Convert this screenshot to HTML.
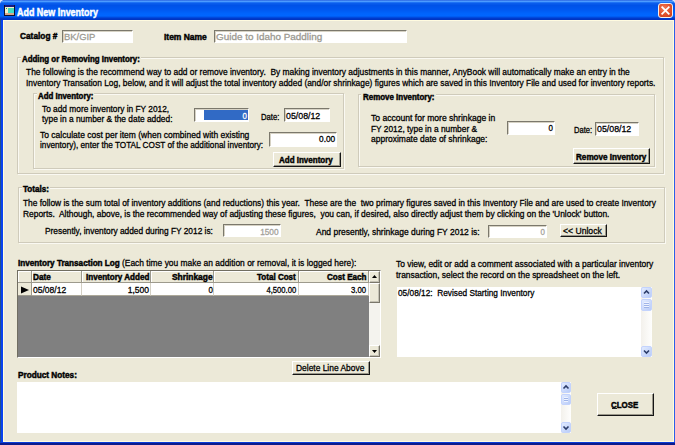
<!DOCTYPE html>
<html><head><meta charset="utf-8">
<style>
html,body{margin:0;padding:0;width:675px;height:445px;overflow:hidden;background:#d8e4f8}
*{box-sizing:border-box}
.a{position:absolute}
.t{position:absolute;white-space:pre;font-family:"Liberation Sans",sans-serif}
#win{position:absolute;left:0;top:0;width:675px;height:445px;background:#0842f0;border-radius:5px 5px 0 0;overflow:hidden}
#title{position:absolute;left:0;top:0;width:675px;height:20px;background:linear-gradient(to bottom,#2b64e0 0px,#4c9bff 1.5px,#1e72f4 2.5px,#0a5cec 3.5px,#0052e8 5.5px,#0058f0 9.5px,#0064fc 13.5px,#0066ff 16px,#0052e6 17px,#0040d4 18px,#0034c2 19px,#0034c2 20px)}
#client{position:absolute;left:3px;top:20px;width:671px;height:422px;background:#ece9d8;border-top:1px solid #fffbe0;border-left:1px solid #fffedc;border-bottom:1px solid #fffbe0;border-right:1px solid #fffedc}
.tb{position:absolute;background:#fff;border-top:1px solid #7b786c;border-left:1px solid #7b786c;border-bottom:1px solid #fff;border-right:1px solid #fff;box-shadow:inset 1px 1px 0 #d6d2c4}
.btn{position:absolute;background:#ece9d8;border-top:1px solid #fff;border-left:1px solid #fff;border-bottom:1px solid #151515;border-right:1px solid #151515;box-shadow:inset -1px -1px 0 #9a978a}
.grp{position:absolute;border:1px solid #cfcbbb;box-shadow:inset 1px 1px 0 #faf9f2,1px 1px 0 #faf9f2}
.gt{position:absolute;background:#ece9d8;height:9px}
.hc{position:absolute;background:#ece9d8;border-right:1px solid #9d9a8d;border-bottom:1px solid #9d9a8d;box-shadow:inset 1px 1px 0 #fff}
.dc{position:absolute;background:#fff;border-right:1px solid #d4d0c4;border-bottom:1px solid #aca899}
.sbb{position:absolute;background:#ece9d8;border-top:1px solid #fff;border-left:1px solid #fff;border-bottom:1px solid #7a776b;border-right:1px solid #7a776b;box-shadow:inset -1px -1px 0 #c4c1b4}
.xsb{position:absolute;background:linear-gradient(to right,#f3f1ec,#fefefd)}
.xbtn{position:absolute;background:linear-gradient(135deg,#e2ebff,#b9ccf8);border:1px solid #c3d3fd;border-radius:2px}
</style></head><body>
<div id="win">
 <div id="title"></div>
 <!-- icon -->
 <div class="a" style="left:4px;top:5px;width:11px;height:11px;background:#101030"></div>
 <div class="a" style="left:5px;top:5px;width:9px;height:2px;background:#1a1a80"></div>
 <div class="a" style="left:5px;top:7px;width:9px;height:8px;background:#f4f0c8"></div>
 <div class="a" style="left:8px;top:8px;width:6px;height:5px;background:linear-gradient(to bottom,#4ad8b0,#38e0d0)"></div>
 <div class="a" style="left:5px;top:13px;width:9px;height:2px;background:#d8a888"></div>
 <div class="a" style="left:6px;top:8px;width:1px;height:1px;background:#30a040"></div>
 <!-- close button -->
 <div class="a" style="left:658px;top:3px;width:15px;height:15px;border-radius:3px;background:radial-gradient(circle at 40% 35%,#f07a58,#e0502a 55%,#c43c18);border:1px solid #f4f0f0"></div>
 <svg class="a" style="left:658px;top:3px" width="15" height="15" viewBox="0 0 15 15"><path d="M4.2 4.2 L10.8 10.8 M10.8 4.2 L4.2 10.8" stroke="#fff" stroke-width="1.7" stroke-linecap="square"/></svg>
 <div class="a" style="left:0;top:20px;width:1px;height:425px;background:#1f4f90"></div>
 <div class="a" style="left:0;top:442px;width:675px;height:1px;background:#0a3cd8"></div>
 <div class="a" style="left:0;top:443px;width:675px;height:2px;background:#0c1c8c"></div>
 <div class="a" style="left:674px;top:20px;width:1px;height:422px;background:#2c5ee8"></div>
 <div id="client"></div>
 <!-- top textboxes -->
 <div class="tb" style="left:62px;top:30px;width:71px;height:13px"></div>
 <div class="tb" style="left:214px;top:30px;width:193px;height:13px"></div>
 <!-- group 1 -->
 <div class="grp" style="left:17px;top:57px;width:647px;height:117px"></div>
 <div class="gt" style="left:21px;top:54px;width:120px"></div>
 <!-- group add -->
 <div class="grp" style="left:33px;top:93px;width:311px;height:76px"></div>
 <div class="gt" style="left:37px;top:89px;width:57px"></div>
 <!-- group remove -->
 <div class="grp" style="left:358px;top:94px;width:297px;height:73px"></div>
 <div class="gt" style="left:361px;top:90px;width:75px"></div>
 <!-- totals -->
 <div class="grp" style="left:18px;top:187px;width:647px;height:56px"></div>
 <div class="gt" style="left:22px;top:183px;width:28px"></div>
 <!-- add inv textboxes -->
 <div class="tb" style="left:194px;top:108px;width:55px;height:14px"></div>
 <div class="a" style="left:204px;top:110px;width:44px;height:10px;background:#316ac5"></div>
 <div class="tb" style="left:284px;top:108px;width:46px;height:14px"></div>
 <div class="tb" style="left:269px;top:132px;width:68px;height:15px"></div>
 <div class="btn" style="left:273px;top:152px;width:68px;height:15px"></div>
 <!-- remove inv -->
 <div class="tb" style="left:507px;top:121px;width:48px;height:14px"></div>
 <div class="tb" style="left:595px;top:122px;width:44px;height:14px"></div>
 <div class="btn" style="left:573px;top:148px;width:77px;height:16px"></div>
 <!-- totals boxes -->
 <div class="tb" style="left:223px;top:224px;width:58px;height:13px"></div>
 <div class="tb" style="left:488px;top:225px;width:59px;height:13px"></div>
 <div class="btn" style="left:560px;top:224px;width:47px;height:13px"></div>
 <!-- grid -->
 <div class="a" style="left:17px;top:270px;width:364px;height:88px;border-top:1px solid #716e62;border-left:1px solid #716e62;border-bottom:1px solid #fff;border-right:1px solid #fff;background:#808080"></div>
 <div class="hc" style="left:18px;top:271px;width:14px;height:12px"></div>
 <div class="hc" style="left:32px;top:271px;width:50px;height:12px"></div>
 <div class="hc" style="left:82px;top:271px;width:69px;height:12px"></div>
 <div class="hc" style="left:151px;top:271px;width:63px;height:12px"></div>
 <div class="hc" style="left:214px;top:271px;width:85px;height:12px"></div>
 <div class="hc" style="left:299px;top:271px;width:70px;height:12px"></div>
 <div class="a" style="left:18px;top:283px;width:14px;height:13px;background:#ece9d8;border-right:1px solid #9d9a8d;border-bottom:1px solid #9d9a8d"></div>
 <svg class="a" style="left:20px;top:286px" width="10" height="8" viewBox="0 0 10 8"><path d="M1 0.5 L9 4 L1 7.5 Z" fill="#000"/></svg>
 <div class="dc" style="left:32px;top:283px;width:50px;height:13px"></div>
 <div class="dc" style="left:82px;top:283px;width:69px;height:13px"></div>
 <div class="dc" style="left:151px;top:283px;width:63px;height:13px"></div>
 <div class="dc" style="left:214px;top:283px;width:85px;height:13px"></div>
 <div class="dc" style="left:299px;top:283px;width:70px;height:13px"></div>
 <!-- grid scrollbar -->
 <div class="a" style="left:369px;top:271px;width:11px;height:86px;background:#f4f3ee"></div>
 <div class="sbb" style="left:369px;top:271px;width:11px;height:12px"></div>
 <svg class="a" style="left:369px;top:271px" width="11" height="12" viewBox="0 0 11 12"><path d="M3 7 L8 7 L5.5 4 Z" fill="#000"/></svg>
 <div class="sbb" style="left:369px;top:283px;width:11px;height:20px"></div>
 <div class="sbb" style="left:369px;top:345px;width:11px;height:12px"></div>
 <svg class="a" style="left:369px;top:345px" width="11" height="12" viewBox="0 0 11 12"><path d="M3 5 L8 5 L5.5 8 Z" fill="#000"/></svg>
 <div class="btn" style="left:292px;top:361px;width:78px;height:14px"></div>
 <!-- comment box -->
 <div class="a" style="left:397px;top:287px;width:255px;height:70px;background:#fff"></div>
 <div class="xsb" style="left:641px;top:287px;width:11px;height:69px"></div>
 <div class="xbtn" style="left:641px;top:287px;width:11px;height:11px"></div>
 <svg class="a" style="left:641px;top:287px" width="11" height="11" viewBox="0 0 11 11"><path d="M3 6.5 L5.5 4 L8 6.5" stroke="#2c3d6a" stroke-width="1.6" fill="none"/></svg>
 <div class="xbtn" style="left:641px;top:299px;width:11px;height:12px"></div>
 <div class="a" style="left:644px;top:302px;width:5px;height:6px;background:repeating-linear-gradient(to bottom,#eef3ff 0,#eef3ff 1px,#9fb4e8 1px,#9fb4e8 2px)"></div>
 <div class="xbtn" style="left:641px;top:346px;width:11px;height:11px"></div>
 <svg class="a" style="left:641px;top:346px" width="11" height="11" viewBox="0 0 11 11"><path d="M3 4.5 L5.5 7 L8 4.5" stroke="#2c3d6a" stroke-width="1.6" fill="none"/></svg>
 <!-- notes box -->
 <div class="a" style="left:17px;top:382px;width:554px;height:51px;background:#fff"></div>
 <div class="xsb" style="left:561px;top:382px;width:10px;height:51px"></div>
 <div class="xbtn" style="left:561px;top:382px;width:10px;height:11px"></div>
 <svg class="a" style="left:561px;top:382px" width="10" height="11" viewBox="0 0 10 11"><path d="M2.5 6.5 L5 4 L7.5 6.5" stroke="#2c3d6a" stroke-width="1.6" fill="none"/></svg>
 <div class="xbtn" style="left:561px;top:394px;width:10px;height:11px"></div>
 <div class="a" style="left:564px;top:397px;width:4px;height:5px;background:repeating-linear-gradient(to bottom,#eef3ff 0,#eef3ff 1px,#9fb4e8 1px,#9fb4e8 2px)"></div>
 <div class="xbtn" style="left:561px;top:422px;width:10px;height:11px"></div>
 <svg class="a" style="left:561px;top:422px" width="10" height="11" viewBox="0 0 10 11"><path d="M2.5 4.5 L5 7 L7.5 4.5" stroke="#2c3d6a" stroke-width="1.6" fill="none"/></svg>
 <!-- close -->
 <div class="btn" style="left:597px;top:393px;width:57px;height:23px"></div>
 <div class="a" style="left:612px;top:408px;width:5px;height:1px;background:#222"></div>
<div class="t" style="left:17.40px;top:7.00px;font-size:10.5px;line-height:10.5px;font-weight:700;color:#fff;-webkit-text-stroke:0.45px #fff;transform:scaleX(0.8510);transform-origin:0 0">Add New Inventory</div>
<div class="t" style="left:20.20px;top:32.00px;font-size:8.6px;line-height:8.6px;font-weight:700;color:#000;-webkit-text-stroke:0.45px #000;transform:scaleX(0.9664);transform-origin:0 0">Catalog #</div>
<div class="t" style="left:64.00px;top:32.00px;font-size:9.6px;line-height:9.6px;font-weight:400;color:#9c9a92;-webkit-text-stroke:0.3px #9c9a92;transform:scaleX(0.9810);transform-origin:0 0">BK/GIP</div>
<div class="t" style="left:164.20px;top:33.00px;font-size:8.6px;line-height:8.6px;font-weight:700;color:#000;-webkit-text-stroke:0.45px #000;transform:scaleX(0.9845);transform-origin:0 0">Item Name</div>
<div class="t" style="left:216.30px;top:32.00px;font-size:9.6px;line-height:9.6px;font-weight:400;color:#9c9a92;-webkit-text-stroke:0.3px #9c9a92;transform:scaleX(1.0317);transform-origin:0 0">Guide to Idaho Paddling</div>
<div class="t" style="left:22.20px;top:55.00px;font-size:8.6px;line-height:8.6px;font-weight:700;color:#000;-webkit-text-stroke:0.45px #000;transform:scaleX(0.9177);transform-origin:0 0">Adding or Removing Inventory:</div>
<div class="t" style="left:26.40px;top:67.00px;font-size:9.6px;line-height:9.6px;font-weight:400;color:#000;-webkit-text-stroke:0.3px #000;transform:scaleX(0.8752);transform-origin:0 0">The following is the recommend way to add or remove inventory.  By making inventory adjustments in this manner, AnyBook will automatically make an entry in the</div>
<div class="t" style="left:26.40px;top:78.00px;font-size:9.6px;line-height:9.6px;font-weight:400;color:#000;-webkit-text-stroke:0.3px #000;transform:scaleX(0.8730);transform-origin:0 0">Inventory Transation Log, below, and it will adjust the total inventory added (and/or shrinkage) figures which are saved in this Inventory File and used for inventory reports.</div>
<div class="t" style="left:37.70px;top:92.00px;font-size:8.6px;line-height:8.6px;font-weight:700;color:#000;-webkit-text-stroke:0.45px #000;transform:scaleX(0.9147);transform-origin:0 0">Add Inventory:</div>
<div class="t" style="left:41.60px;top:104.00px;font-size:9.6px;line-height:9.6px;font-weight:400;color:#000;-webkit-text-stroke:0.3px #000;transform:scaleX(0.8680);transform-origin:0 0">To add more inventory in FY 2012,</div>
<div class="t" style="left:41.60px;top:114.00px;font-size:9.6px;line-height:9.6px;font-weight:400;color:#000;-webkit-text-stroke:0.3px #000;transform:scaleX(0.8704);transform-origin:0 0">type in a number &amp; the date added:</div>
<div class="t" style="right:427.80px;top:112.00px;font-size:8.8px;line-height:8.8px;font-weight:400;color:#fff;-webkit-text-stroke:0.3px #fff;transform:scaleX(0.9000);transform-origin:100% 0">0</div>
<div class="t" style="left:261.10px;top:112.00px;font-size:9.6px;line-height:9.6px;font-weight:400;color:#000;-webkit-text-stroke:0.3px #000;transform:scaleX(0.7987);transform-origin:0 0">Date:</div>
<div class="t" style="left:285.50px;top:111.00px;font-size:9.6px;line-height:9.6px;font-weight:400;color:#000;-webkit-text-stroke:0.3px #000;transform:scaleX(0.9172);transform-origin:0 0">05/08/12</div>
<div class="t" style="left:40.30px;top:130.00px;font-size:9.6px;line-height:9.6px;font-weight:400;color:#000;-webkit-text-stroke:0.3px #000;transform:scaleX(0.8862);transform-origin:0 0">To calculate cost per item (when combined with existing</div>
<div class="t" style="left:40.30px;top:140.00px;font-size:9.6px;line-height:9.6px;font-weight:400;color:#000;-webkit-text-stroke:0.3px #000;transform:scaleX(0.8539);transform-origin:0 0">inventory), enter the TOTAL COST of the additional inventory:</div>
<div class="t" style="right:339.40px;top:135.00px;font-size:8.8px;line-height:8.8px;font-weight:400;color:#000;-webkit-text-stroke:0.3px #000;transform:scaleX(0.9400);transform-origin:100% 0">0.00</div>
<div class="t" style="left:279.40px;top:156.00px;font-size:8.6px;line-height:8.6px;font-weight:700;color:#000;-webkit-text-stroke:0.45px #000;transform:scaleX(0.9306);transform-origin:0 0">Add Inventory</div>
<div class="t" style="left:362.50px;top:93.00px;font-size:8.6px;line-height:8.6px;font-weight:700;color:#000;-webkit-text-stroke:0.45px #000;transform:scaleX(0.9237);transform-origin:0 0">Remove Inventory:</div>
<div class="t" style="left:371.30px;top:113.00px;font-size:9.6px;line-height:9.6px;font-weight:400;color:#000;-webkit-text-stroke:0.3px #000;transform:scaleX(0.8927);transform-origin:0 0">To account for more shrinkage in</div>
<div class="t" style="left:371.30px;top:124.00px;font-size:9.6px;line-height:9.6px;font-weight:400;color:#000;-webkit-text-stroke:0.3px #000;transform:scaleX(0.8696);transform-origin:0 0">FY 2012, type in a number &amp;</div>
<div class="t" style="left:371.30px;top:134.00px;font-size:9.6px;line-height:9.6px;font-weight:400;color:#000;-webkit-text-stroke:0.3px #000;transform:scaleX(0.8840);transform-origin:0 0">approximate date of shrinkage:</div>
<div class="t" style="right:122.20px;top:124.00px;font-size:8.8px;line-height:8.8px;font-weight:400;color:#000;-webkit-text-stroke:0.3px #000;transform:scaleX(0.9000);transform-origin:100% 0">0</div>
<div class="t" style="left:573.80px;top:125.00px;font-size:9.6px;line-height:9.6px;font-weight:400;color:#000;-webkit-text-stroke:0.3px #000;transform:scaleX(0.7898);transform-origin:0 0">Date:</div>
<div class="t" style="left:597.20px;top:124.00px;font-size:9.6px;line-height:9.6px;font-weight:400;color:#000;-webkit-text-stroke:0.3px #000;transform:scaleX(0.9172);transform-origin:0 0">05/08/12</div>
<div class="t" style="left:575.60px;top:153.00px;font-size:8.6px;line-height:8.6px;font-weight:700;color:#000;-webkit-text-stroke:0.45px #000;transform:scaleX(0.9445);transform-origin:0 0">Remove Inventory</div>
<div class="t" style="left:22.90px;top:185.00px;font-size:8.6px;line-height:8.6px;font-weight:700;color:#000;-webkit-text-stroke:0.45px #000;transform:scaleX(0.9399);transform-origin:0 0">Totals:</div>
<div class="t" style="left:23.30px;top:198.00px;font-size:9.6px;line-height:9.6px;font-weight:400;color:#000;-webkit-text-stroke:0.3px #000;transform:scaleX(0.8728);transform-origin:0 0">The follow is the sum total of inventory additions (and reductions) this year.  These are the  two primary figures saved in this Inventory File and are used to create Inventory</div>
<div class="t" style="left:23.30px;top:209.00px;font-size:9.6px;line-height:9.6px;font-weight:400;color:#000;-webkit-text-stroke:0.3px #000;transform:scaleX(0.8756);transform-origin:0 0">Reports.  Although, above, is the recommended way of adjusting these figures,  you can, if desired, also directly adjust them by clicking on the 'Unlock' button.</div>
<div class="t" style="left:45.00px;top:226.00px;font-size:9.6px;line-height:9.6px;font-weight:400;color:#000;-webkit-text-stroke:0.3px #000;transform:scaleX(0.8691);transform-origin:0 0">Presently, inventory added during FY 2012 is:</div>
<div class="t" style="right:396.00px;top:228.00px;font-size:8.8px;line-height:8.8px;font-weight:400;color:#a4a29a;-webkit-text-stroke:0.3px #a4a29a;transform:scaleX(0.9400);transform-origin:100% 0">1500</div>
<div class="t" style="left:315.70px;top:227.00px;font-size:9.6px;line-height:9.6px;font-weight:400;color:#000;-webkit-text-stroke:0.3px #000;transform:scaleX(0.8835);transform-origin:0 0">And presently, shrinkage during FY 2012 is:</div>
<div class="t" style="right:130.60px;top:228.00px;font-size:8.8px;line-height:8.8px;font-weight:400;color:#a4a29a;-webkit-text-stroke:0.3px #a4a29a;transform:scaleX(0.9000);transform-origin:100% 0">0</div>
<div class="t" style="left:563.20px;top:226.00px;font-size:9.6px;line-height:9.6px;font-weight:400;color:#000;-webkit-text-stroke:0.3px #000;transform:scaleX(0.8971);transform-origin:0 0">&lt;&lt; Unlock</div>
<div class="t" style="left:17.60px;top:259.00px;font-size:8.6px;line-height:8.6px;font-weight:700;color:#000;-webkit-text-stroke:0.45px #000;transform:scaleX(0.9472);transform-origin:0 0">Inventory Transaction Log</div>
<div class="t" style="left:122.20px;top:258.00px;font-size:9.6px;line-height:9.6px;font-weight:400;color:#000;-webkit-text-stroke:0.3px #000;transform:scaleX(0.8790);transform-origin:0 0">(Each time you make an addition or removal, it is logged here):</div>
<div class="t" style="left:396.20px;top:259.00px;font-size:9.6px;line-height:9.6px;font-weight:400;color:#000;-webkit-text-stroke:0.3px #000;transform:scaleX(0.8806);transform-origin:0 0">To view, edit or add a comment associated with a particular inventory</div>
<div class="t" style="left:396.20px;top:270.00px;font-size:9.6px;line-height:9.6px;font-weight:400;color:#000;-webkit-text-stroke:0.3px #000;transform:scaleX(0.8774);transform-origin:0 0">transaction, select the record on the spreadsheet on the left.</div>
<div class="t" style="left:33.10px;top:273.00px;font-size:8.6px;line-height:8.6px;font-weight:700;color:#000;-webkit-text-stroke:0.45px #000;transform:scaleX(0.9539);transform-origin:0 0">Date</div>
<div class="t" style="left:85.60px;top:273.00px;font-size:8.6px;line-height:8.6px;font-weight:700;color:#000;-webkit-text-stroke:0.45px #000;transform:scaleX(0.9391);transform-origin:0 0">Inventory Added</div>
<div class="t" style="left:172.00px;top:273.00px;font-size:8.6px;line-height:8.6px;font-weight:700;color:#000;-webkit-text-stroke:0.45px #000;transform:scaleX(0.9766);transform-origin:0 0">Shrinkage</div>
<div class="t" style="left:257.20px;top:273.00px;font-size:8.6px;line-height:8.6px;font-weight:700;color:#000;-webkit-text-stroke:0.45px #000;transform:scaleX(0.9372);transform-origin:0 0">Total Cost</div>
<div class="t" style="left:326.90px;top:273.00px;font-size:8.6px;line-height:8.6px;font-weight:700;color:#000;-webkit-text-stroke:0.45px #000;transform:scaleX(0.9392);transform-origin:0 0">Cost Each</div>
<div class="t" style="left:33.30px;top:285.00px;font-size:9.6px;line-height:9.6px;font-weight:400;color:#000;-webkit-text-stroke:0.3px #000;transform:scaleX(0.8902);transform-origin:0 0">05/08/12</div>
<div class="t" style="right:525.80px;top:286.00px;font-size:8.8px;line-height:8.8px;font-weight:400;color:#000;-webkit-text-stroke:0.3px #000;transform:scaleX(0.9700);transform-origin:100% 0">1,500</div>
<div class="t" style="right:462.40px;top:286.00px;font-size:8.8px;line-height:8.8px;font-weight:400;color:#000;-webkit-text-stroke:0.3px #000;transform:scaleX(0.9000);transform-origin:100% 0">0</div>
<div class="t" style="right:378.80px;top:286.00px;font-size:8.8px;line-height:8.8px;font-weight:400;color:#000;-webkit-text-stroke:0.3px #000;transform:scaleX(0.8700);transform-origin:100% 0">4,500.00</div>
<div class="t" style="right:308.40px;top:286.00px;font-size:8.8px;line-height:8.8px;font-weight:400;color:#000;-webkit-text-stroke:0.3px #000;transform:scaleX(0.8800);transform-origin:100% 0">3.00</div>
<div class="t" style="left:398.00px;top:288.00px;font-size:9.6px;line-height:9.6px;font-weight:400;color:#000;-webkit-text-stroke:0.3px #000;transform:scaleX(0.8637);transform-origin:0 0">05/08/12:  Revised Starting Inventory</div>
<div class="t" style="left:296.30px;top:363.00px;font-size:9.6px;line-height:9.6px;font-weight:400;color:#000;-webkit-text-stroke:0.3px #000;transform:scaleX(0.8777);transform-origin:0 0">Delete Line Above</div>
<div class="t" style="left:17.50px;top:371.00px;font-size:8.6px;line-height:8.6px;font-weight:700;color:#000;-webkit-text-stroke:0.45px #000;transform:scaleX(0.9560);transform-origin:0 0">Product Notes:</div>
<div class="t" style="left:611.10px;top:401.00px;font-size:8.6px;line-height:8.6px;font-weight:700;color:#000;-webkit-text-stroke:0.45px #000;transform:scaleX(0.9209);transform-origin:0 0">CLOSE</div>
</div>
</body></html>
